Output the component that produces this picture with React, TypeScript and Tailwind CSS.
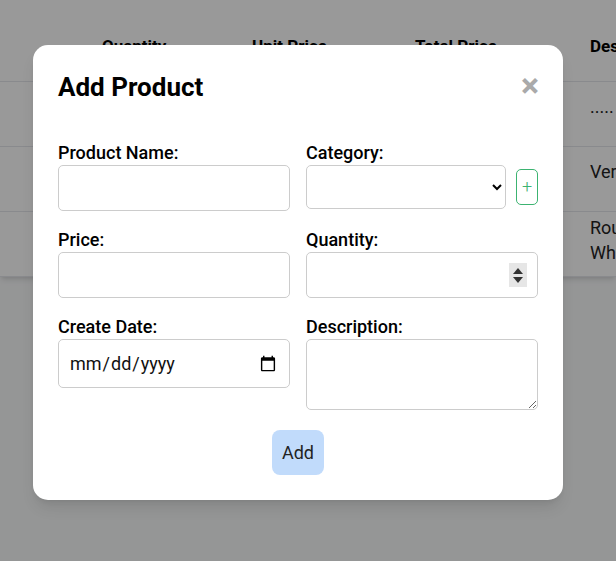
import React from 'react'

const rows = [
  { qty: '12', unit: '$4.00', total: '$48.00', desc: '.....', pad: 'pt-[12px]' },
  { qty: '5', unit: '$10.00', total: '$50.00', desc: 'Very good product', pad: 'pt-[12px]' },
  { qty: '8', unit: '$2.50', total: '$20.00', desc: 'Round neck shirt,\nWhite colour', pad: 'pt-[3px]' },
]

const cols = 'grid grid-cols-[86px_150px_163px_175px_260px]'

const ProductTable = () => {
  return (
    <div className="h-[277px] overflow-hidden bg-white shadow-md">
      <div className={`${cols} h-[82px] border-b border-gray-200 pt-[34px] text-[17px] font-bold leading-[25px] text-black`}>
        <div></div>
        <div className="pl-4">Quantity</div>
        <div className="pl-4">Unit Price</div>
        <div className="pl-4">Total Price</div>
        <div className="pl-4">Description</div>
      </div>
      {rows.map((r, i) => (
        <div
          key={i}
          className={`${cols} h-[65px] overflow-hidden border-b border-gray-200 text-[18px] leading-[25px] text-[#222] ${r.pad}`}
        >
          <div></div>
          <div className="pl-4">{r.qty}</div>
          <div className="pl-4">{r.unit}</div>
          <div className="pl-4">{r.total}</div>
          <div className="whitespace-pre-line pl-4">{r.desc}</div>
        </div>
      ))}
    </div>
  )
}

const Label = ({ text }: { text: string }) => (
  <label className="block h-6 text-[18px] font-medium leading-6 text-black">{text}</label>
)

const AddProductModal = () => {
  return (
    <div className="w-[530px] rounded-[15px] bg-white px-[25px] pt-[27px] pb-[25px] shadow-lg">
      <div className="flex items-start justify-between">
        <h2 className="text-[26px] font-bold leading-[31px] text-black">Add Product</h2>
        <span className="mr-[-1px] mt-[-4px] text-[34px] font-bold leading-[34px] text-[#aaa]">×</span>
      </div>

      <div className="mt-[38px] grid grid-cols-2 gap-x-4 gap-y-[17px]">
        <div>
          <Label text="Product Name:" />
          <input type="text" className="h-[46px] w-full rounded-[5px] border border-[#ccc] px-2.5" />
        </div>
        <div>
          <Label text="Category:" />
          <div className="flex h-[46px] items-start gap-[10px]">
            <select className="h-[44px] w-[200px] rounded-[5px] border border-[#ccc] bg-white px-2.5 text-[16px]">
              <option value=""></option>
            </select>
            <button className="mt-[4px] flex h-[36px] w-[22px] items-center justify-center rounded-[5px] border border-[#3cb371] text-[18px] font-light leading-none text-[#3cb371]">
              +
            </button>
          </div>
        </div>

        <div>
          <Label text="Price:" />
          <input type="text" className="h-[46px] w-full rounded-[5px] border border-[#ccc] px-2.5" />
        </div>
        <div>
          <Label text="Quantity:" />
          <div className="relative">
            <input
              type="number"
              className="h-[46px] w-full rounded-[5px] border border-[#ccc] px-2.5 [&::-webkit-inner-spin-button]:appearance-none [&::-webkit-outer-spin-button]:appearance-none"
            />
            <span className="absolute right-[11px] top-[11px] flex h-[24px] w-[18px] flex-col items-center justify-center gap-[3px] bg-[#e6e6e6]">
              <svg width="10" height="6" viewBox="0 0 10 6">
                <path d="M5 0 L10 6 L0 6 Z" fill="#333" />
              </svg>
              <svg width="10" height="6" viewBox="0 0 10 6">
                <path d="M0 0 L10 0 L5 6 Z" fill="#333" />
              </svg>
            </span>
          </div>
        </div>

        <div>
          <Label text="Create Date:" />
          <input
            type="date"
            className="h-[49px] w-full rounded-[5px] border border-[#ccc] px-2.5 text-[18px] text-[#111]"
          />
        </div>
        <div>
          <Label text="Description:" />
          <textarea className="block h-[71px] w-full rounded-[5px] border border-[#ccc] px-2.5"></textarea>
        </div>
      </div>

      <div className="mt-5 flex justify-center">
        <button className="h-[45px] w-[52px] rounded-[8px] bg-[#c1dbfb] text-[18px] text-[#222]">Add</button>
      </div>
    </div>
  )
}

export default function App() {
  return (
    <div className="relative h-[561px] w-[616px] overflow-hidden bg-gray-50 font-['Roboto',sans-serif]">
      <ProductTable />
      <div className="absolute inset-0 bg-black/40 pl-[33px] pt-[45px]">
        <AddProductModal />
      </div>
    </div>
  )
}
